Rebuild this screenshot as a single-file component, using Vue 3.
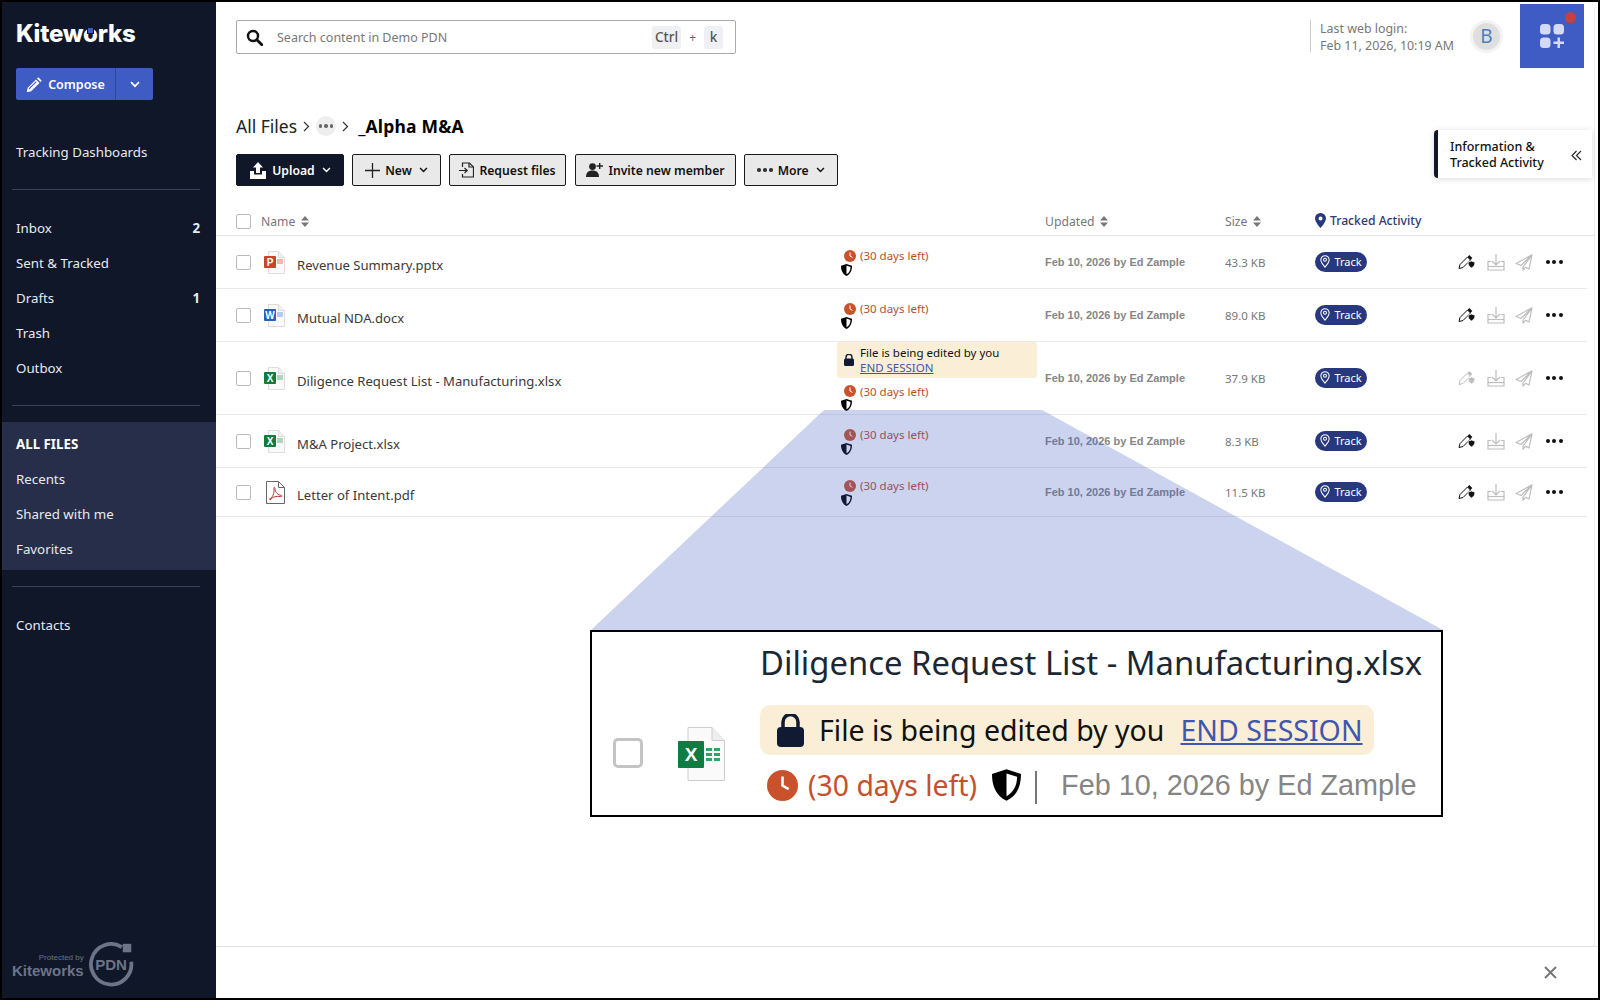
<template>
  <div class="app">
    <aside class="side">
      <div class="logo">Kiteworks<span class="logo__dot"></span></div>
      <div class="compose">
        <button class="compose__main">
          <svg width="17" height="17" viewBox="0 0 17 17"><path d="M12.3 1.2l3.5 3.5-1.300 1.300-3.500-3.500zM10 3.500l3.500 3.500-8.300 8.300-4.500 1 1-4.500zM9.800 5.200l-7.200 7.200.8.800 7.200-7.200z" fill="#fff" fill-rule="evenodd"/></svg>
          Compose
        </button>
        <button class="compose__caret">
          <svg width="10" height="7" viewBox="0 0 10 7"><path d="M1 1.2l4 4 4-4" fill="none" stroke="#fff" stroke-width="1.7"/></svg>
        </button>
      </div>

      <nav class="nav nav--first"><a>Tracking Dashboards</a></nav>
      <hr class="rule rule--first" />
      <nav class="nav">
        <a v-for="i in mailNav" :key="i.label">{{ i.label }}<b v-if="i.count">{{ i.count }}</b></a>
      </nav>
      <hr class="rule" />
      <nav class="nav nav--active">
        <a class="strong">ALL FILES</a>
        <a>Recents</a>
        <a>Shared with me</a>
        <a>Favorites</a>
      </nav>
      <hr class="rule rule--last" />
      <nav class="nav"><a>Contacts</a></nav>

      <div class="protected">
        <div class="protected__text">
          <small>Protected by</small>
          <strong>Kiteworks</strong>
        </div>
        <svg width="47" height="47" viewBox="0 0 50 50">
          <path d="M36 6.5A21.5 21.5 0 1 0 46 22" fill="none" stroke="#6c7488" stroke-width="4"/>
          <rect x="37" y="3" width="9" height="9" fill="#6c7488"/>
          <text x="24.5" y="31" text-anchor="middle" font-family="Liberation Sans, sans-serif" font-weight="700" font-size="16" fill="#6c7488">PDN</text>
        </svg>
      </div>
    </aside>

    <main class="main">
      <div class="content">
        <header class="top">
          <div class="search">
            <svg width="17" height="17" viewBox="0 0 17 17"><circle cx="7" cy="7" r="5" fill="none" stroke="#111" stroke-width="2.4"/><path d="M10.8 10.8l5 5" stroke="#111" stroke-width="2.8" stroke-linecap="round"/></svg>
            <span class="search__ph">Search content in Demo PDN</span>
            <span class="kbd">Ctrl</span><span class="kbd-plus">+</span><span class="kbd">k</span>
          </div>
          <div class="login">Last web login:<br />Feb 11, 2026, 10:19 AM</div>
          <div class="avatar">B</div>
          <div class="apps">
            <span class="apps__dot"></span>
            <svg width="24" height="24" viewBox="0 0 24 24" fill="#d3daf5">
              <rect x="0" y="0" width="10.5" height="10.5" rx="3.5"/>
              <rect x="13.5" y="0" width="10.5" height="10.5" rx="3.5"/>
              <rect x="0" y="13.5" width="10.5" height="10.5" rx="3.5"/>
              <path d="M17.5 13.5h2.5v4h4V20h-4v4h-2.5v-4h-4v-2.5h4z"/>
            </svg>
          </div>
        </header>

        <div class="crumbs">
          <span>All Files</span>
          <svg class="crumbs__sep" width="7" height="11" viewBox="0 0 7 11"><path d="M1 1l4.500 4.500L1 10" fill="none" stroke="#333" stroke-width="1.2"/></svg>
          <span class="crumbs__more"><i></i><i></i><i></i></span>
          <svg class="crumbs__sep" width="7" height="11" viewBox="0 0 7 11"><path d="M1 1l4.500 4.500L1 10" fill="none" stroke="#333" stroke-width="1.2"/></svg>
          <strong>_Alpha M&amp;A</strong>
        </div>

        <div class="toolbar">
          <button class="btn btn--dark">
            <svg width="18" height="17" viewBox="0 0 18 17" fill="#fff"><path d="M9 0l5 5.500h-3V11H7V5.500H4z"/><path d="M1 9h4v3.500h8V9h4v8H1z"/></svg>
            Upload
            <svg class="caret" width="9" height="6" viewBox="0 0 10 7"><path d="M1 1.200l4 4 4-4" fill="none" stroke="#fff" stroke-width="1.700"/></svg>
          </button>
          <button class="btn">
            <svg width="15" height="15" viewBox="0 0 15 15"><path d="M7.500 0v15M0 7.500h15" stroke="#222" stroke-width="1.300"/></svg>
            New
            <svg class="caret" width="9" height="6" viewBox="0 0 10 7"><path d="M1 1.200l4 4 4-4" fill="none" stroke="#111" stroke-width="1.700"/></svg>
          </button>
          <button class="btn">
            <svg width="15" height="16" viewBox="0 0 15 16" fill="none" stroke="#222" stroke-width="1.200"><path d="M3.500 5V1h7l4 4v10h-11v-3"/><path d="M10 1v4h4.500"/><path d="M0 8.500h8M5.500 6l2.700 2.500L5.500 11"/></svg>
            Request files
          </button>
          <button class="btn">
            <svg width="17" height="14" viewBox="0 0 17 14" fill="#222"><circle cx="6.500" cy="3.600" r="3.400"/><path d="M0 14c0-4.500 2.600-6.500 6.500-6.500S13 9.500 13 14z"/><path d="M13 0h1.400v2.300H17v1.400h-2.600V6H13V3.700h-2.400V2.300H13z"/></svg>
            Invite new member
          </button>
          <button class="btn">
            <span class="dots dots--small"><i></i><i></i><i></i></span>
            More
            <svg class="caret" width="9" height="6" viewBox="0 0 10 7"><path d="M1 1.200l4 4 4-4" fill="none" stroke="#111" stroke-width="1.700"/></svg>
          </button>
        </div>

        <div class="table">
          <div class="grid head">
            <span class="check"></span>
            <span class="head__name">Name <svg class="sort" width="8" height="11" viewBox="0 0 8 11" fill="#777"><path d="M4 0l4 4.500H0zM4 11L0 6.500h8z"/></svg></span>
            <span></span>
            <span>Updated <svg class="sort" width="8" height="11" viewBox="0 0 8 11" fill="#777"><path d="M4 0l4 4.500H0zM4 11L0 6.500h8z"/></svg></span>
            <span>Size <svg class="sort" width="8" height="11" viewBox="0 0 8 11" fill="#777"><path d="M4 0l4 4.500H0zM4 11L0 6.500h8z"/></svg></span>
            <span class="head__tracked">
              <svg width="11" height="15" viewBox="0 0 11 15"><path fill-rule="evenodd" d="M5.500 0A5.400 5.400 0 0 1 11 5.400C11 9 5.500 15 5.500 15S0 9 0 5.400A5.400 5.400 0 0 1 5.500 0zm0 3.400a2 2 0 1 0 0 4 2 2 0 0 0 0-4z" fill="#27387f"/></svg>
              Tracked Activity
            </span>
          </div>

          <div v-for="f in files" :key="f.name" class="grid row" :style="{ height: f.h + 'px' }">
            <span class="check"></span>
            <span class="ficon">
              <svg v-if="f.letter" width="21" height="23" viewBox="0 0 21 23">
                <path d="M4.500.5h10l6 6v16h-16z" fill="#fafafa" stroke="#ddd"/>
                <path d="M14.500.5v6h6" fill="#f0f0f0" stroke="#ddd"/>
                <rect x="0" y="5" width="12" height="12" rx="1" :fill="f.color"/>
                <text x="6" y="14.500" text-anchor="middle" font-family="Liberation Sans, sans-serif" font-weight="700" font-size="10" fill="#fff">{{ f.letter }}</text>
                <rect x="13" y="8" width="6" height="5" :fill="f.tint"/>
              </svg>
              <svg v-else class="ficon__pdf" width="19" height="23" viewBox="0 0 19 23">
                <path d="M.5.5h12l6 6v16H.5z" fill="#fff" stroke="#666"/>
                <path d="M12.500.5v6h6" fill="none" stroke="#666"/>
                <path d="M3.500 18c3-1 5-6 4.500-10-.5-2.500 1-2 1 0 0 3 3 6 6.500 6.500 1 .5 0 1.500-1.500 1-3-.5-7 0-9 2.500-1 1.500-1.500 1-.5 0z" fill="none" stroke="#c8303a" stroke-width="1"/>
              </svg>
            </span>
            <span class="fname">{{ f.name }}</span>
            <div class="exp" :class="{ 'exp--top': f.editing }">
              <div v-if="f.editing" class="editing">
                <svg width="10" height="12" viewBox="0 0 10 12"><path d="M2 5V3.300a3 3 0 0 1 6 0V5" fill="none" stroke="#111a33" stroke-width="1.400"/><rect y="4.500" width="10" height="7.500" rx="1.500" fill="#111a33"/></svg>
                <div>File is being edited by you<br /><a>END SESSION</a></div>
              </div>
              <div class="exp__days">
                <svg width="12" height="12" viewBox="0 0 12 12"><circle cx="6" cy="6" r="6" fill="#c9522c"/><path d="M6 2.500V6l2.400 1.400" fill="none" stroke="#fff" stroke-width="1"/></svg>
                (30 days left)
              </div>
              <svg class="shield" width="11" height="12" viewBox="0 0 11 12"><path d="M5.500 0l5.500 1.800C11 6.500 9.500 10 5.500 12 1.500 10 0 6.500 0 1.800z" fill="#000"/><path d="M5.500 1.600l4 1.300c0 3.200-1.200 5.700-4 7.400z" fill="#fff"/></svg>
            </div>
            <span class="updated">Feb 10, 2026 by Ed Zample</span>
            <span class="size">{{ f.size }}</span>
            <span><span class="track">
              <svg width="10" height="13" viewBox="0 0 11 15" fill="none" stroke="#fff" stroke-width="1.200"><path d="M5.500.8a4.800 4.800 0 0 1 4.800 4.800c0 3.200-4.800 8.400-4.800 8.400S.7 8.800.7 5.600A4.800 4.800 0 0 1 5.500.8z"/><circle cx="5.500" cy="5.500" r="1.700"/></svg>
              Track
            </span></span>
            <span class="actions">
              <svg width="18" height="16" viewBox="0 0 18 16" :class="{ faded: f.faded }">
                <path d="M1 14.500l1-4 7.500-7.500 3 3L5 13.500z" fill="none" stroke="currentColor" stroke-width="1"/>
                <path d="M9.500 3l1.800-2 3 3-1.800 2z" fill="currentColor"/>
                <path d="M13.500 7l3.500 1.200c0 2.800-1.300 4.700-3.500 5.800-2.200-1.100-3.500-3-3.500-5.800z" fill="currentColor" stroke="#fff" stroke-width=".8"/>
              </svg>
              <svg class="faded" width="18" height="17" viewBox="0 0 18 17" fill="none" stroke="currentColor" stroke-width="1.200"><path d="M9 0v10.500M5 7l4 4 4-4"/><path d="M4 7.500H1V16h16V7.500h-3"/><path d="M1 12.500h16"/></svg>
              <svg class="faded" width="18" height="17" viewBox="0 0 18 17" fill="none" stroke="currentColor" stroke-width="1.200"><path d="M17 .8L1 9.500l5 2 11-10.700L8 13v3.200l2.700-3L14 15z" stroke-linejoin="round"/></svg>
              <span class="dots"><i></i><i></i><i></i></span>
            </span>
          </div>
        </div>
      </div>

      <footer class="foot">
        <svg width="13" height="13" viewBox="0 0 13 13"><path d="M1 1l11 11M12 1L1 12" stroke="#777" stroke-width="2"/></svg>
      </footer>
    </main>

    <!-- Info tab sits over the page edge -->
    <div class="info">
      <span>Information &amp;<br />Tracked Activity</span>
      <svg width="11" height="11" viewBox="0 0 11 11"><path d="M5.500 1L1 5.500 5.500 10M10 1L5.500 5.500 10 10" fill="none" stroke="#222" stroke-width="1.100"/></svg>
    </div>

    <!-- Callout drawn over the table -->
    <div class="beam"></div>
    <div class="callout">
      <span class="callout__check"></span>
      <svg class="callout__icon" width="47" height="54" viewBox="0 0 47 54">
        <path d="M10 .5h24l12.500 13v40H10z" fill="#fafafa" stroke="#ccc"/>
        <path d="M34 .5v13h12.500" fill="#eee" stroke="#ccc"/>
        <rect x="0" y="14" width="26" height="27" rx="1" fill="#107c41"/>
        <text x="13" y="33.500" text-anchor="middle" font-family="Liberation Sans, sans-serif" font-weight="700" font-size="19" fill="#fff">X</text>
        <path d="M28 21h6v3h-6zM36 21h6v3h-6zM28 26h6v3h-6zM36 26h6v3h-6zM28 31h6v3h-6zM36 31h6v3h-6z" fill="#33a468"/>
      </svg>
      <div class="callout__body">
        <div class="callout__title">Diligence Request List - Manufacturing.xlsx</div>
        <div class="callout__pill">
          <svg width="27" height="33" viewBox="0 0 27 33"><path d="M6 14V8a7.500 7.500 0 0 1 15 0v6" fill="none" stroke="#111a33" stroke-width="3.500"/><rect y="13" width="27" height="20" rx="4" fill="#111a33"/></svg>
          <span>File is being edited by you</span>
          <a>END SESSION</a>
        </div>
        <div class="callout__meta">
          <svg width="31" height="31" viewBox="0 0 12 12"><circle cx="6" cy="6" r="6" fill="#c9522c"/><path d="M6 2.500V6l2.400 1.400" fill="none" stroke="#fff" stroke-width="1"/></svg>
          <span class="callout__days">(30 days left)</span>
          <svg class="callout__shield" width="29" height="32" viewBox="0 0 11 12"><path d="M5.500 0l5.500 1.800C11 6.500 9.500 10 5.500 12 1.500 10 0 6.500 0 1.800z" fill="#000"/><path d="M5.500 1.600l4 1.300c0 3.200-1.200 5.700-4 7.400z" fill="#fff"/></svg>
          <span class="callout__bar"></span>
          <span class="callout__date">Feb 10, 2026 <em>by</em> Ed Zample</span>
        </div>
      </div>
    </div>
  </div>
</template>

<script setup>
const mailNav = [
  { label: 'Inbox', count: 2 },
  { label: 'Sent & Tracked' },
  { label: 'Drafts', count: 1 },
  { label: 'Trash' },
  { label: 'Outbox' },
]

const files = [
  { name: 'Revenue Summary.pptx', size: '43.3 KB', h: 53, letter: 'P', color: '#c8452a', tint: '#f3b9a6' },
  { name: 'Mutual NDA.docx', size: '89.0 KB', h: 53, letter: 'W', color: '#2b5eb8', tint: '#b3ccee' },
  { name: 'Diligence Request List - Manufacturing.xlsx', size: '37.9 KB', h: 73, letter: 'X', color: '#107c41', tint: '#a9d8bd', editing: true, faded: true },
  { name: 'M&A Project.xlsx', size: '8.3 KB', h: 53, letter: 'X', color: '#107c41', tint: '#a9d8bd' },
  { name: 'Letter of Intent.pdf', size: '11.5 KB', h: 49 },
]
</script>

<style>
html, body { background: #fff; }
</style>

<style scoped>
.app {
  position: relative;
  display: flex;
  width: 1600px;
  height: 1000px;
  box-sizing: border-box;
  border: 2px solid #000;
  overflow: hidden;
  font-family: "Noto Sans", "Open Sans", sans-serif;
  color: #222;
  background: #fff;
}

/* sidebar */
.side {
  width: 214px;
  flex: none;
  display: flex;
  flex-direction: column;
  background: #0f1729;
  color: #e8eaf0;
  font-size: 13.3px;
}
.logo {
  position: relative;
  width: max-content;
  margin: 16px 0 0 14px;
  font-family: Inter, sans-serif;
  font-weight: 800;
  font-size: 24px;
  line-height: 32px;
  letter-spacing: -0.2px;
  color: #fff;
}
.logo__dot {
  position: absolute;
  left: 72px;
  top: 10px;
  width: 5px;
  height: 5px;
  background: #3f5bc4;
  box-shadow: 0 0 0 1px #0f1729;
}
.compose {
  display: flex;
  width: 137px;
  height: 32px;
  margin: 18px 0 0 14px;
}
.compose button {
  border: 0;
  background: #3f5bc4;
  color: #fff;
  font: 600 12.5px "Noto Sans", sans-serif;
  display: flex;
  align-items: center;
  justify-content: center;
}
.compose__main {
  width: 100px;
  gap: 5px;
  border-radius: 2px 0 0 2px;
  border-right: 1px solid #34489a !important;
}
.compose__caret {
  flex: 1;
  border-radius: 0 2px 2px 0;
}
.nav {
  display: flex;
  flex-direction: column;
}
.nav a {
  display: flex;
  justify-content: space-between;
  height: 35px;
  align-items: center;
  padding: 0 16px 0 14px;
}
.nav b { font-weight: 700; }
.nav--first { margin-top: 34px; }
.nav--active {
  background: #262e49;
  padding: 4px 0;
}
.strong { font-weight: 700; color: #fff; }
.rule {
  height: 1px;
  border: 0;
  margin: 20px 16px 16px 10px;
  background: #3a4259;
}
.rule--first { margin-bottom: 20px; margin-top: 20px; }
.rule--last { margin-top: 16px; margin-bottom: 20px; }
.protected {
  margin-top: auto;
  margin-bottom: 10px;
  margin-left: 10px;
  display: flex;
  align-items: flex-end;
  gap: 4px;
  color: #6c7488;
}
.protected__text {
  display: flex;
  flex-direction: column;
  align-items: flex-end;
  font-family: "Liberation Sans", sans-serif;
  margin-bottom: 9px;
}
.protected__text small { font-size: 8px; line-height: 9px; }
.protected__text strong { font-size: 15px; line-height: 17px; }

/* main */
.main {
  flex: 1;
  min-width: 0;
  display: flex;
  flex-direction: column;
}
.content {
  flex: 1;
  margin-right: 3px;
  border-right: 1px solid #eee;
  border-top-right-radius: 8px;
}
.top {
  display: flex;
  align-items: flex-start;
  height: 72px;
  padding: 18px 10px 0 20px;
  box-sizing: border-box;
}
.search {
  width: 500px;
  height: 34px;
  box-sizing: border-box;
  border: 1px solid #aaa;
  border-radius: 2px;
  display: flex;
  align-items: center;
  padding: 0 12px 0 9px;
  font-size: 12.5px;
}
.search__ph {
  flex: 1;
  margin-left: 14px;
  color: #777;
}
.kbd {
  background: #eef0f3;
  padding: 2px 3px;
  border-radius: 3px;
  color: #555;
  font-weight: 500;
  font-size: 13.5px;
  line-height: 19px;
  min-width: 13px;
  text-align: center;
}
.kbd-plus { margin: 0 8px; color: #666; font-size: 12px; }
.login {
  margin-left: auto;
  border-left: 1px solid #ccc;
  padding-left: 9px;
  height: 32px;
  font-size: 12.4px;
  line-height: 17px;
  color: #777;
}
.avatar {
  width: 27px;
  height: 27px;
  margin: 3px 20px 0 19px;
  border-radius: 50%;
  background: #dfdfdf;
  box-shadow: 0 0 0 3px #f3f3f3;
  color: #4a7fc0;
  font-size: 19px;
  line-height: 27px;
  text-align: center;
}
.apps {
  position: relative;
  width: 64px;
  height: 64px;
  margin-top: -16px;
  background: #3f5bc4;
  display: flex;
  align-items: center;
  justify-content: center;
}
.apps__dot {
  position: absolute;
  top: 8px;
  right: 8px;
  width: 11px;
  height: 11px;
  border-radius: 50%;
  background: #c4413f;
}
.crumbs {
  display: flex;
  align-items: center;
  height: 24px;
  margin: 40px 0 0 20px;
  font-size: 17.5px;
}
.crumbs strong { font-weight: 700; color: #000; margin-left: 9px; letter-spacing: 0.2px; }
.crumbs__sep { margin-left: 6px; }
.crumbs__more {
  width: 20px;
  height: 20px;
  margin-left: 6px;
  border-radius: 50%;
  background: #eee;
  display: flex;
  align-items: center;
  justify-content: center;
  gap: 2px;
}
.crumbs__more i {
  width: 3.500px;
  height: 3.500px;
  border-radius: 50%;
  background: #666;
}
.toolbar {
  display: flex;
  gap: 8px;
  margin: 16px 0 0 20px;
}
.btn {
  height: 32px;
  box-sizing: border-box;
  display: flex;
  align-items: center;
  justify-content: center;
  gap: 5px;
  padding: 0;
  white-space: nowrap;
  border: 1px solid #1a1a1a;
  border-radius: 2px;
  background: #e9e9e9;
  color: #111;
  font: 600 12.2px "Noto Sans", sans-serif;
}
.btn:nth-child(1) { width: 108px; }
.btn:nth-child(2) { width: 89px; }
.btn:nth-child(3) { width: 117px; }
.btn:nth-child(4) { width: 161px; margin-left: 1px; }
.btn:nth-child(5) { width: 94px; }
.btn--dark {
  background: #0f1729;
  border-color: #0f1729;
  color: #fff;
}
.caret { margin-left: 2px; }
.dots {
  display: inline-flex;
  gap: 2.500px;
  align-items: center;
}
.dots i {
  width: 4px;
  height: 4px;
  border-radius: 50%;
  background: #111;
}
.dots--small i { width: 3.500px; height: 3.500px; background: #333; }

/* table */
.table { margin-top: 21px; }
.grid {
  display: grid;
  grid-template-columns: 28px 33px 540px 208px 180px 90px 143px 1fr;
  align-items: center;
  padding-left: 20px;
  box-sizing: border-box;
}
.head {
  height: 29px;
  grid-template-columns: 25px 576px 208px 180px 90px 1fr;
  border-bottom: 1px solid #e2e2e2;
  font-size: 12.200px;
  color: #777;
}
.head__tracked {
  display: flex;
  align-items: center;
  gap: 4px;
  margin-bottom: 2px;
  color: #2d3a73;
  font-weight: 500;
}
.sort { margin-left: 2px; vertical-align: -1px; }
.row {
  margin-right: 7px;
  border-bottom: 1px solid #eaeaea;
}
.check {
  display: block;
  width: 13px;
  height: 13px;
  border: 1px solid #bbb;
  border-radius: 2px;
}
.ficon { display: flex; align-items: center; }
.ficon__pdf { margin-left: 2px; }
.fname {
  padding-top: 6px;
  font-size: 13.100px;
  color: #3a3a3a;
}
.exp {
  position: relative;
  font-size: 11.500px;
  color: #b5502f;
}
.exp--top { align-self: start; }
.exp__days {
  display: flex;
  align-items: center;
  gap: 4px;
  height: 14px;
  padding-left: 7px;
}
.shield { display: block; margin: 1px 0 0 4px; }
.editing {
  display: flex;
  align-items: center;
  gap: 6px;
  width: 200px;
  height: 36px;
  margin-bottom: 6px;
  padding-left: 7px;
  box-sizing: border-box;
  border-radius: 3px;
  background: #faeed6;
  color: #111;
  font-size: 11.500px;
  line-height: 15.500px;
}
.editing a { color: #4057ad; text-decoration: underline; }
.updated {
  font: 700 11px "Liberation Sans", sans-serif;
  color: #868686;
}
.size { font-size: 11.500px; color: #777; }
.track {
  display: inline-flex;
  align-items: center;
  justify-content: center;
  gap: 4px;
  width: 52px;
  height: 20px;
  border-radius: 10px;
  background: #27387f;
  color: #fff;
  font-size: 11px;
}
.actions {
  display: flex;
  align-items: center;
  gap: 10.500px;
  color: #111;
}
.faded { color: #bdbdbd; }
.actions .dots { margin-left: 2px; }

.foot {
  height: 52px;
  box-sizing: border-box;
  flex: none;
  border-top: 1px solid #e2e2e2;
  display: flex;
  align-items: center;
  justify-content: flex-end;
  padding: 0 41px 0 0;
}

/* overlays */
.info {
  position: absolute;
  left: 1432px;
  top: 128px;
  width: 158px;
  height: 48px;
  box-sizing: border-box;
  border-left: 4px solid #0f1729;
  border-radius: 4px 0 0 4px;
  background: #fff;
  box-shadow: 0 1px 6px rgba(0, 0, 0, 0.15);
  display: flex;
  align-items: center;
  justify-content: space-between;
  padding: 2px 10px 0 12px;
  font-size: 12.500px;
  line-height: 16px;
  font-weight: 500;
  color: #111;
}
.beam {
  position: absolute;
  left: 589px;
  top: 408px;
  width: 852px;
  height: 220px;
  background: rgba(63, 91, 196, 0.27);
  clip-path: polygon(233px 0, 451px 0, 100% 100%, 0 100%);
}
.callout {
  position: absolute;
  left: 588px;
  top: 628px;
  width: 853px;
  height: 187px;
  box-sizing: border-box;
  border: 2px solid #000;
  background: #fff;
  display: flex;
  align-items: center;
  padding-left: 21px;
}
.callout__check {
  width: 30px;
  height: 30px;
  box-sizing: border-box;
  border: 3px solid #c4c4c4;
  border-radius: 5px;
  margin-top: 58px;
}
.callout__icon { flex: none; margin: 60px 0 0 35px; }
.callout__body {
  margin-left: 35px;
  display: flex;
  flex-direction: column;
  margin-top: -2px;
}
.callout__title {
  font-size: 32.800px;
  line-height: 44px;
  color: #1b2733;
  white-space: nowrap;
}
.callout__pill {
  display: flex;
  align-items: center;
  width: 614px;
  height: 50px;
  box-sizing: border-box;
  margin-top: 20px;
  padding-left: 17px;
  border-radius: 10px;
  background: #faeed6;
  font-size: 28.500px;
  color: #111;
  white-space: nowrap;
}
.callout__pill span { margin-left: 15px; }
.callout__pill a {
  margin-left: 16px;
  color: #4057ad;
  text-decoration: underline;
}
.callout__meta {
  display: flex;
  align-items: center;
  margin-top: 11px;
  padding-left: 7px;
  white-space: nowrap;
}
.callout__days {
  margin-left: 10px;
  font-size: 28.400px;
  color: #c4502d;
}
.callout__shield { margin-left: 15px; }
.callout__bar {
  width: 2px;
  height: 33px;
  margin-left: 14px;
  margin-top: 4px;
  background: #777;
}
.callout__date {
  margin-left: 24px;
  font: 28.800px "Liberation Sans", sans-serif;
  color: #858585;
}
.callout__date em { font-style: normal; }
</style>
